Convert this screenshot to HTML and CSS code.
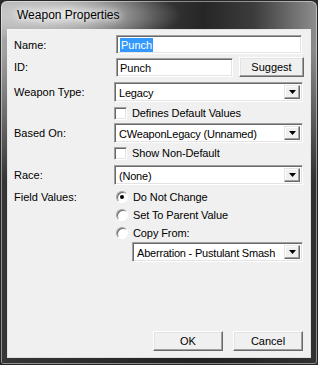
FILE: index.html
```html
<!DOCTYPE html>
<html lang="en">
<head>
    <meta charset="UTF-8">
    <title>Weapon Properties</title>
    <link rel="stylesheet" href="styles.css">
</head>
<body>

<div class="window">
    <div class="titlebar"><span class="title">Weapon Properties</span></div>

    <div class="client">
        <div class="row row-name">
            <span class="label">Name:</span>
            <div class="field field-name"><span class="selected">Punch</span></div>
        </div>

        <div class="row row-id">
            <span class="label">ID:</span>
            <div class="id-box">
                <div class="field field-id">Punch</div>
                <div class="button btn-suggest">Suggest</div>
            </div>
        </div>

        <div class="row row-select">
            <span class="label">Weapon Type:</span>
            <div class="combo">
                <span class="combo-text">Legacy</span>
                <span class="combo-btn"><svg width="7" height="4" viewBox="0 0 7 4"><polygon points="0,0 7,0 3.5,4" fill="#000"/></svg></span>
            </div>
        </div>

        <div class="row row-check">
            <span class="label"></span>
            <div class="check-item"><span class="checkbox"></span>Defines Default Values</div>
        </div>

        <div class="row row-select2">
            <span class="label">Based On:</span>
            <div class="combo">
                <span class="combo-text">CWeaponLegacy (Unnamed)</span>
                <span class="combo-btn"><svg width="7" height="4" viewBox="0 0 7 4"><polygon points="0,0 7,0 3.5,4" fill="#000"/></svg></span>
            </div>
        </div>

        <div class="row row-check">
            <span class="label"></span>
            <div class="check-item"><span class="checkbox"></span>Show Non-Default</div>
        </div>

        <div class="row row-race">
            <span class="label">Race:</span>
            <div class="combo">
                <span class="combo-text">(None)</span>
                <span class="combo-btn"><svg width="7" height="4" viewBox="0 0 7 4"><polygon points="0,0 7,0 3.5,4" fill="#000"/></svg></span>
            </div>
        </div>

        <div class="row row-fields">
            <span class="label label-top">Field Values:</span>
            <div class="radios">
                <div class="radio-item"><span class="radio checked"></span>Do Not Change</div>
                <div class="radio-item"><span class="radio"></span>Set To Parent Value</div>
                <div class="radio-item"><span class="radio"></span>Copy From:</div>
                <div class="combo combo-copy">
                    <span class="combo-text">Aberration - Pustulant Smash</span>
                    <span class="combo-btn"><svg width="7" height="4" viewBox="0 0 7 4"><polygon points="0,0 7,0 3.5,4" fill="#000"/></svg></span>
                </div>
            </div>
        </div>

        <div class="footer">
            <div class="button btn-footer">OK</div>
            <div class="button btn-footer">Cancel</div>
        </div>
    </div>
</div>

</body>
</html>
```

FILE: styles.css
```css
body {
    margin: 0;
    background-color: #2a2a2a;
    font-family: "Liberation Sans", Arial, sans-serif;
    font-size: 11px;
    color: #000;
}

/* window frame */
.window {
    width: 318px;
    height: 365px;
    box-sizing: border-box;
    display: flex;
    flex-direction: column;
    padding: 0 7px 7px 7px;
    border: 1px solid #262626;
    border-radius: 7px 7px 3px 3px;
    box-shadow: inset 0 0 0 1px rgba(255,255,255,0.45);
    background:
        radial-gradient(ellipse 120px 30px at 60px 14px, rgba(238,238,238,0.9), rgba(200,200,200,0) 100%),
        linear-gradient(to bottom, rgba(30,30,30,0) 0, rgba(30,30,30,0) 50px, rgba(34,34,34,0.85) 180px),
        linear-gradient(to right, #a4a4a4 0%, #747474 22%, #3a3a3a 48%, #262626 64%, #3c3c3c 80%, #8e8e8e 100%);
}

.titlebar {
    height: 29px;
    line-height: 29px;
    padding-left: 9px;
}

.title {
    font-size: 12px;
    color: #000;
    text-shadow: 0 0 6px #fff, 0 0 10px rgba(255,255,255,0.8);
}

.client {
    flex: 1;
    display: flex;
    flex-direction: column;
    background-color: #f0f0f0;
    padding: 5px 7px 6px 6px;
    box-shadow: 0 0 0 1px rgba(255,255,255,0.85);
}

/* rows */
.row {
    display: grid;
    grid-template-columns: 100px 1fr;
    align-items: center;
}

.row-id { margin-top: 3px; }
.row-select { margin-top: 5px; }
.row-check { margin-top: 4px; height: 14px; }
.row-select2 { margin-top: 3px; }
.row-race { margin-top: 5px; }
.row-fields { margin-top: 5px; align-items: start; }
.row-select2 + .row-check { margin-top: 3px; }

.label-top {
    line-height: 14px;
}

/* sunken fields */
.field, .combo {
    box-sizing: border-box;
    background-color: #fff;
    border: 1px solid;
    border-color: #a0a0a0 #fff #fff #a0a0a0;
    box-shadow: inset 1px 1px #696969, inset -1px -1px #e3e3e3;
}

.field {
    height: 19px;
    line-height: 15px;
    padding: 2px 2px 0 3px;
}

.field-name {
    margin: 0 1px 0 2px;
}

.selected {
    display: inline-block;
    background-color: #3399ff;
    color: #fff;
    line-height: 14px;
    padding: 0 1px;
}

.id-box {
    display: flex;
    align-items: center;
    gap: 6px;
}

.field-id {
    width: 117px;
    margin-left: 2px;
}

/* raised buttons */
.button {
    box-sizing: border-box;
    background-color: #f0f0f0;
    border: 1px solid;
    border-color: #fff #696969 #696969 #fff;
    box-shadow: inset -1px -1px #a0a0a0, inset 1px 1px #e3e3e3;
    text-align: center;
}

.btn-suggest {
    width: 65px;
    height: 20px;
    line-height: 18px;
}

/* combo boxes */
.combo {
    height: 20px;
    display: flex;
    align-items: stretch;
    padding: 2px;
}

.combo-text {
    flex: 1;
    line-height: 16px;
    padding-left: 2px;
    letter-spacing: -0.2px;
}

.combo-btn {
    width: 16px;
    box-sizing: border-box;
    display: flex;
    align-items: center;
    justify-content: center;
    background-color: #f0f0f0;
    border: 1px solid;
    border-color: #e3e3e3 #696969 #696969 #e3e3e3;
    box-shadow: inset -1px -1px #a0a0a0, inset 1px 1px #fff;
}

.combo-copy {
    margin-top: 2px;
    margin-left: 18px;
}

/* check boxes and radios */
.check-item, .radio-item {
    display: flex;
    align-items: center;
    height: 14px;
    letter-spacing: -0.1px;
}

.checkbox {
    width: 13px;
    height: 13px;
    box-sizing: border-box;
    margin-right: 5px;
    background-color: #fff;
    border: 1px solid;
    border-color: #a0a0a0 #fff #fff #a0a0a0;
    box-shadow: inset 1px 1px #696969, inset -1px -1px #e3e3e3;
}

.radios {
    display: flex;
    flex-direction: column;
}

.radio-item + .radio-item {
    margin-top: 4px;
}

.radio {
    width: 12px;
    height: 12px;
    box-sizing: border-box;
    margin: 0 5px 0 2px;
    border-radius: 50%;
    background-color: #fff;
    border: 1px solid;
    border-color: #a0a0a0 #fff #fff #a0a0a0;
    box-shadow: inset 1px 1px #696969;
    display: flex;
    align-items: center;
    justify-content: center;
}

.radio.checked::after {
    content: "";
    width: 4px;
    height: 4px;
    border-radius: 50%;
    background-color: #000;
}

/* bottom buttons */
.footer {
    margin-top: auto;
    display: flex;
    justify-content: flex-end;
    gap: 10px;
}

.btn-footer {
    width: 70px;
    height: 20px;
    line-height: 18px;
}
```
